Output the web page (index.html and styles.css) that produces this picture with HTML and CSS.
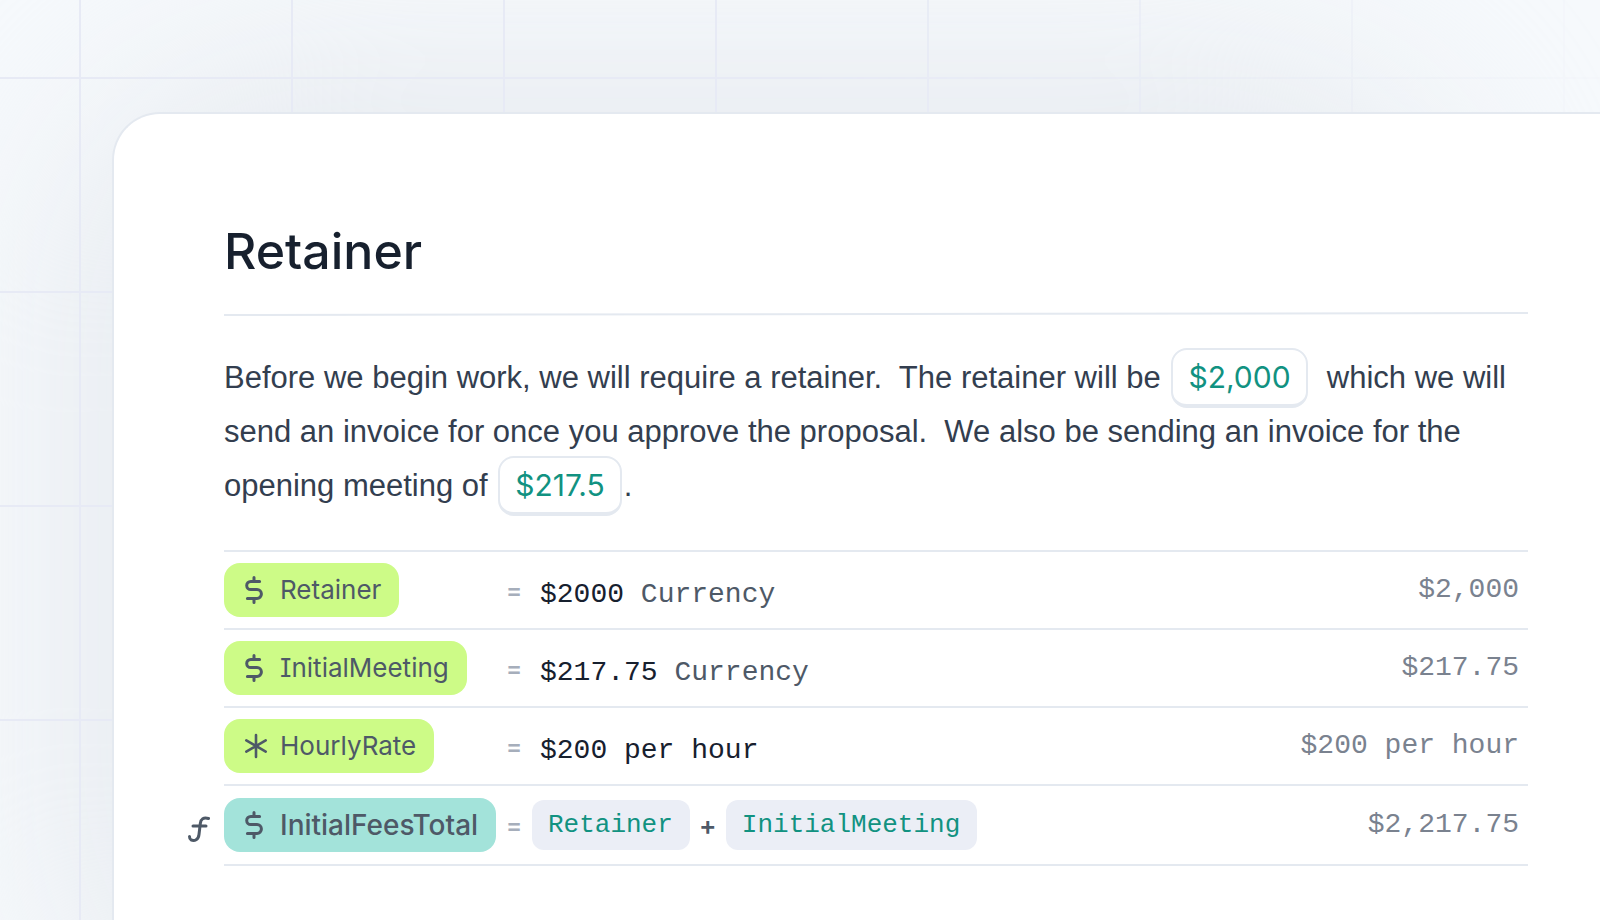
FILE: index.html
```
<!DOCTYPE html>
<html lang="en">
<head>
<meta charset="utf-8">
<title>Retainer</title>
<link rel="stylesheet" href="styles.css">
</head>
<body>
<svg class="sprite" aria-hidden="true">
  <symbol id="dollar" viewBox="0 0 24 28">
    <path d="M15.600 5.400H6.800a4.100 4.100 0 0 0 0 8.200h6.200a4.400 4.400 0 0 1 0 8.800H3.400M10 1.500v3.500M10 23v3.500"/>
  </symbol>
  <symbol id="asterisk" viewBox="0 0 24 28">
    <path stroke-width="2.600" d="M12 3v22M2.300 8.400l19.400 11.200M21.700 8.400l-19.400 11.200"/>
  </symbol>
</svg>
<div class="backdrop" aria-hidden="true"></div>
<main class="sheet">
  <h1 class="title">Retainer</h1>
  <svg class="rule" viewBox="0 0 1304 4" preserveAspectRatio="none" aria-hidden="true"><path d="M0 3L1304 1"/></svg>
  <p class="copy">Before we begin work, we will require a retainer.&nbsp; The retainer will be <span class="amount">$2,000</span>&nbsp; which we will send an invoice for once you approve the proposal.&nbsp; We also be sending an invoice for the opening meeting of <span class="amount">$217.5</span>.</p>
  <table class="vars">
    <tr>
      <th scope="row" class="name"><span class="tag"><svg class="icon"><use href="#dollar"/></svg>Retainer</span></th>
      <td class="eq">=</td>
      <td class="value">$2000 <span class="unit">Currency</span></td>
      <td class="result">$2,000</td>
    </tr>
    <tr>
      <th scope="row" class="name"><span class="tag"><svg class="icon"><use href="#dollar"/></svg>InitialMeeting</span></th>
      <td class="eq">=</td>
      <td class="value">$217.75 <span class="unit">Currency</span></td>
      <td class="result">$217.75</td>
    </tr>
    <tr>
      <th scope="row" class="name"><span class="tag"><svg class="icon"><use href="#asterisk"/></svg>HourlyRate</span></th>
      <td class="eq">=</td>
      <td class="value">$200 per hour</td>
      <td class="result">$200 per hour</td>
    </tr>
    <tr class="total">
      <th scope="row" class="name">
        <svg class="fx" viewBox="0 0 22 26" aria-hidden="true"><path d="M20.500 2.500C15.500 1 12.800 3 12.300 7.500L11 18.500C10.500 23.500 6.500 25.500 3 23.800C1.800 23.200 1.500 22 1.500 20.500M5 10H18"/></svg>
        <span class="tag tag-total"><svg class="icon"><use href="#dollar"/></svg>InitialFeesTotal</span>
      </th>
      <td class="eq">=</td>
      <td class="formula"><div class="terms"><span class="term">Retainer</span><span class="plus">+</span><span class="term">InitialMeeting</span></div></td>
      <td class="result">$2,217.75</td>
    </tr>
  </table>
</main>
</body>
</html>
```
FILE: styles.css
```
* { box-sizing: border-box; }

body {
  position: relative;
  z-index: 0;
  margin: 0;
  min-height: 100vh;
  display: flex;
  flex-direction: column;
  font-family: "Liberation Sans", Arial, sans-serif;
  color: #333e4f;
  background: #f6f9fc;
}

.sprite { display: none; }

.backdrop {
  position: absolute;
  inset: 0;
  z-index: -1;
  overflow: hidden;
}

/* soft shade behind the sheet */
.backdrop::before {
  content: "";
  position: absolute;
  inset: 80px 150px -120px 80px;
  border-radius: 200px;
  background: #e5e9ee;
  filter: blur(100px);
}

/* grid lines, fading out to the right */
.backdrop::after {
  content: "";
  position: absolute;
  inset: 0;
  background:
    linear-gradient(to right, #e7eaf5 2px, transparent 2px) 79px 0 / 212px 100%,
    linear-gradient(to bottom, #e7eaf5 2px, transparent 2px) 0 77px / 100% 214px;
  mask-image: linear-gradient(to right, #000 50%, transparent 105%);
}

.sheet {
  flex: 1;
  margin: 112px 0 0 112px;
  padding: 108px 72px 54px 110px;
  border: 2px solid #e4e9f0;
  border-width: 2px 0 0 2px;
  border-radius: 48px 0 0 0;
  background: #fff;
}

.title {
  margin: 0;
  font: 500 50px/58px Inter, sans-serif;
  color: #17202e;
}

.rule {
  display: block;
  width: 100%;
  height: 4px;
  margin: 32px 0 35px;
  stroke: #e4e9f0;
  stroke-width: 2;
}

.copy {
  margin: 0 0 37px;
  font-size: 31px;
  line-height: 54px;
}

.amount {
  margin: 0 2px;
  padding: 9px 15px;
  border: 2px solid #e4e9f0;
  border-bottom-width: 4px;
  border-radius: 16px;
  font: 30px/1 Inter, sans-serif;
  color: #119281;
}

.vars {
  width: 100%;
  border-spacing: 0;
  border-top: 2px solid #e4e9f0;
  font: 28px/32px "Liberation Mono", monospace;
}

.vars th, .vars td {
  height: 78px;
  padding: 0;
  border-bottom: 2px solid #e4e9f0;
  text-align: left;
  font-weight: 400;
  white-space: nowrap;
}

.vars .total th, .vars .total td { height: 80px; }

.vars .name {
  position: relative;
  width: 282px;
}

.tag {
  display: flex;
  align-items: center;
  gap: 12px;
  width: max-content;
  height: 54px;
  padding: 0 18px 0 20px;
  border-radius: 16px;
  background: #cdfb87;
  color: #4e5967;
  font-family: Inter, sans-serif;
  font-size: 26px;
  font-feature-settings: "cv08";
}

.tag-total {
  background: #a3e3da;
  font-size: 28px;
  font-weight: 500;
  font-feature-settings: normal;
}

.icon {
  width: 24px;
  height: 28px;
  fill: none;
  stroke: #4e5967;
  stroke-width: 3;
  stroke-linecap: round;
}

.fx {
  position: absolute;
  left: -36px;
  top: 30px;
  width: 22px;
  height: 26px;
  fill: none;
  stroke: #4e5967;
  stroke-width: 3;
  stroke-linecap: round;
}

.vars .eq {
  width: 26px;
  padding-top: 2px;
  font: 600 24px/28px Inter, sans-serif;
  color: #a6aebb;
}

.vars .value {
  padding: 10px 0 0 8px;
  color: #17202e;
}

.unit { color: #4e5967; }

.vars .result {
  padding-right: 9px;
  text-align: right;
  color: #7a828f;
}

.terms {
  display: flex;
  align-items: center;
}

.term {
  padding: 0 17px 0 16px;
  border-radius: 12px;
  background: #ebeef6;
  color: #119281;
  font-size: 26px;
  line-height: 50px;
}

.plus {
  width: 36px;
  padding-top: 2px;
  text-align: center;
  font: 600 26px/28px Inter, sans-serif;
  color: #4e5967;
}
```
